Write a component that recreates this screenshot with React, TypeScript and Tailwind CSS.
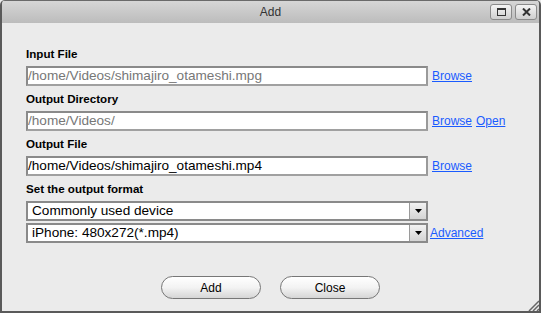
import React from 'react';

const font = { fontFamily: '"Liberation Sans", Arial, sans-serif' };

const Field = ({ value, muted }: { value: string; muted?: boolean }) => (
  <div
    className={`w-[402px] h-[20px] bg-white border-2 border-[#8a8a8a] border-r-[#9a9a9a] border-b-[#a0a0a0] flex items-center pl-[0px] text-[13.6px] leading-none ${
      muted ? 'text-[#777]' : 'text-black'
    }`}
  >
    {value}
  </div>
);

const Select = ({ value }: { value: string }) => (
  <div className="w-[402px] h-[20px] bg-white border-2 border-[#8a8a8a] flex items-center text-[13.6px] leading-none">
    <span className="flex-1 pl-[4px]">{value}</span>
    <span className="w-[17px] h-full bg-gradient-to-b from-[#f2f2f2] to-[#d4d4d4] border-l border-[#9a9a9a] flex items-center justify-center">
      <svg width="7" height="4" viewBox="0 0 7 4">
        <path d="M0 0h7L3.5 4z" fill="#000" />
      </svg>
    </span>
  </div>
);

const Link = ({ children }: { children: React.ReactNode }) => (
  <span className="text-[12px] text-[#1a5bff] underline leading-none">{children}</span>
);

const Label = ({ children }: { children: React.ReactNode }) => (
  <div className="text-[11.6px] font-bold text-black h-[25px] flex items-center pt-[1px]">{children}</div>
);

export default function App() {
  return (
    <div className="w-[541px] h-[313px] bg-[#ebebeb]" style={font}>
      <div className="w-full h-full flex flex-col border-2 border-t-0 border-[#5a5a5a] rounded-t-[5px] overflow-hidden relative">
        {/* title bar */}
        <div className="h-[23px] bg-gradient-to-b from-[#d6d6d6] to-[#bcbcbc] border-t border-[#6a6a6a] flex items-center justify-center relative shrink-0">
          <span className="text-[12px] text-[#333]">Add</span>
          <div className="absolute right-[2px] top-[3px] flex gap-[3px]">
            <div className="w-[22px] h-[16px] rounded-[3px] border border-[#8a8a8a] bg-gradient-to-b from-[#f4f4f4] to-[#cfcfcf] flex items-center justify-center">
              <div className="w-[9px] h-[8px] border border-[#333] border-t-2" />
            </div>
            <div className="w-[22px] h-[16px] rounded-[3px] border border-[#8a8a8a] bg-gradient-to-b from-[#f4f4f4] to-[#cfcfcf] flex items-center justify-center">
              <svg width="9" height="8" viewBox="0 0 9 8">
                <path d="M1 0.5l7 7M8 0.5l-7 7" stroke="#333" strokeWidth="2" />
              </svg>
            </div>
          </div>
        </div>

        {/* form */}
        <div className="flex-1 pl-[24px] pt-[18px] flex flex-col">
          <Label>Input File</Label>
          <div className="flex items-center gap-[4px]">
            <Field value="/home/Videos/shimajiro_otameshi.mpg" muted />
            <Link>Browse</Link>
          </div>
          <Label>Output Directory</Label>
          <div className="flex items-center gap-[4px]">
            <Field value="/home/Videos/" muted />
            <Link>Browse</Link>
            <Link>Open</Link>
          </div>
          <Label>Output File</Label>
          <div className="flex items-center gap-[4px]">
            <Field value="/home/Videos/shimajiro_otameshi.mp4" />
            <Link>Browse</Link>
          </div>
          <Label>Set the output format</Label>
          <Select value="Commonly used device" />
          <div className="flex items-center gap-[2px] mt-[2px]">
            <Select value="iPhone: 480x272(*.mp4)" />
            <Link>Advanced</Link>
          </div>

          <div className="flex justify-center gap-[19px] mt-[33px] pr-[24px]">
            <button className="w-[100px] h-[23px] rounded-full border border-[#777] bg-gradient-to-b from-[#ffffff] via-[#f3f3f3] to-[#d6d6d6] text-[12px] text-black">
              Add
            </button>
            <button className="w-[100px] h-[23px] rounded-full border border-[#777] bg-gradient-to-b from-[#ffffff] via-[#f3f3f3] to-[#d6d6d6] text-[12px] text-black">
              Close
            </button>
          </div>
        </div>

        {/* resize grip */}
        <svg className="absolute right-0 bottom-0" width="12" height="12" viewBox="0 0 12 12">
          <path d="M12 2L2 12M12 6L6 12M12 10L10 12" stroke="#666" strokeWidth="1.5" />
        </svg>
      </div>
    </div>
  );
}
